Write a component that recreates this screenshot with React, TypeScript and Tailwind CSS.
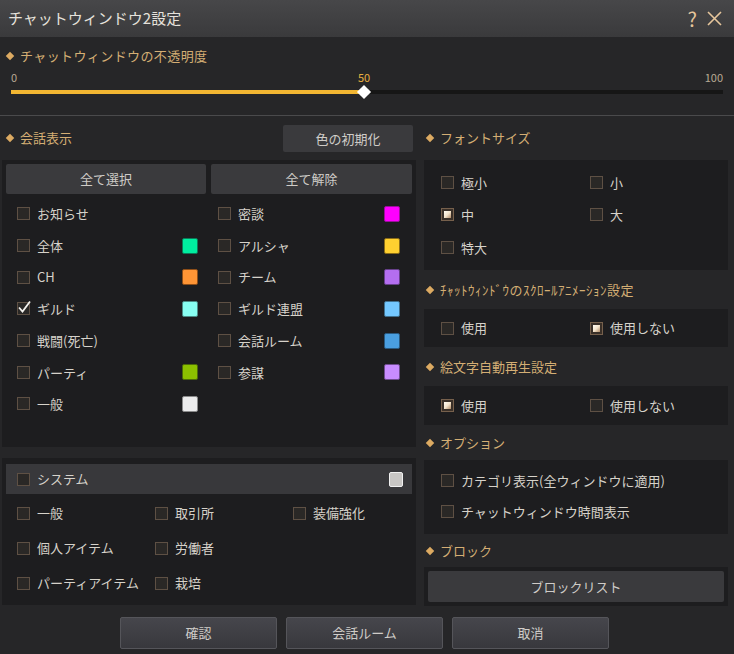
import React from "react";

type Mark = "none" | "check" | "dot";

const Box = ({ mark = "none" }: { mark?: Mark }) => {
  if (mark === "dot") {
    return (
      <span className="flex w-[13px] h-[13px] shrink-0 border border-[#76604c] bg-[#3a3028] p-[2px]">
        <span className="flex-1 bg-gradient-to-br from-[#fffcf4] via-[#f4e4cc] to-[#b08c68]" />
      </span>
    );
  }
  return (
    <span className="relative w-[13px] h-[13px] shrink-0 border border-[#5e5044] bg-[#2a2826]">
      {mark === "check" && (
        <svg className="absolute -top-[3px] -left-[1px] w-[15px] h-[14px]" viewBox="0 0 15 14">
          <path d="M2 7.5 L5.5 11.5 L13 1.5" fill="none" stroke="#f4f2ee" strokeWidth="1.8" />
        </svg>
      )}
    </span>
  );
};

const Heading = ({ text, className = "" }: { text: string; className?: string }) => (
  <div className={`flex items-center gap-[7px] text-[13px] text-[#d4ae74] ${className}`}>
    <span className="w-[6px] h-[6px] rotate-45 bg-[#dcaa62]" />
    <span>{text}</span>
  </div>
);

const Check = ({ label, mark, className = "" }: { label: string; mark?: Mark; className?: string }) => (
  <div className={`flex items-center gap-[7px] text-[13px] text-[#d6d2ca] ${className}`}>
    <Box mark={mark} />
    <span className="whitespace-nowrap">{label}</span>
  </div>
);

const Swatch = ({ color }: { color: string }) => <span className={`w-4 h-4 shrink-0 rounded-[2px] border ${color}`} />;

type Item = { label: string; mark?: Mark; color?: string } | null;

const rows: [Item, Item][] = [
  [{ label: "お知らせ" }, { label: "密談", color: "bg-[#ff00ff] border-[#9a109a]" }],
  [{ label: "全体", color: "bg-[#00eea0] border-[#0c7a58]" }, { label: "アルシャ", color: "bg-[#ffd030] border-[#8a6c18]" }],
  [{ label: "CH", color: "bg-[#ff9535] border-[#8e4e18]" }, { label: "チーム", color: "bg-[#b46ef0] border-[#66408a]" }],
  [{ label: "ギルド", mark: "check", color: "bg-[#88fff2] border-[#4c8c86]" }, { label: "ギルド連盟", color: "bg-[#74c8ff] border-[#40708e]" }],
  [{ label: "戦闘(死亡)" }, { label: "会話ルーム", color: "bg-[#4a9fe0] border-[#2a5a80]" }],
  [{ label: "パーティ", color: "bg-[#8cc000] border-[#4c6a08]" }, { label: "参謀", color: "bg-[#c88cff] border-[#6e4c8e]" }],
  [{ label: "一般", color: "bg-[#ececec] border-[#8a8a8a]" }, null],
];

const systemRows = [
  ["一般", "取引所", "装備強化"],
  ["個人アイテム", "労働者", ""],
  ["パーティアイテム", "栽培", ""],
];

const Btn = ({ label, className = "" }: { label: string; className?: string }) => (
  <button className={`flex items-center justify-center rounded-[2px] bg-[#3a3a3d] text-[13px] text-[#cfccc8] ${className}`}>
    {label}
  </button>
);

const Cell = ({ item, className }: { item: Item; className: string }) => (
  <div className={`flex items-center shrink-0 ${className}`}>
    {item && (
      <>
        <Check label={item.label} mark={item.mark} className="flex-1" />
        {item.color && <Swatch color={item.color} />}
      </>
    )}
  </div>
);

const Panel = ({ children, className = "" }: { children: React.ReactNode; className?: string }) => (
  <div className={`bg-[#1d1d1f] ${className}`}>{children}</div>
);

export default function App() {
  return (
    <div
      className="w-[734px] h-[654px] overflow-hidden bg-[#262628] flex flex-col"
      style={{ fontFamily: '"Noto Sans CJK JP", "Noto Sans", sans-serif' }}
    >
      {/* title */}
      <div className="h-[37px] flex items-center pl-[8px] pr-[12px] bg-gradient-to-b from-[#474749] to-[#3a3a3c]">
        <span className="text-[15px] text-[#e6e2dc] flex-1">チャットウィンドウ2設定</span>
        <span className="text-[20px] leading-none text-[#e6c69c] mr-[10px]">?</span>
        <svg width="15" height="15" viewBox="0 0 15 15">
          <path d="M1 1 L14 14 M14 1 L1 14" stroke="#e6c69c" strokeWidth="1.6" />
        </svg>
      </div>

      {/* opacity */}
      <div className="h-[79px] border-b border-[#4a4a4c] pt-[9px]">
        <Heading text="チャットウィンドウの不透明度" className="pl-[7px] tracking-[0.4px]" />
        <div className="relative mx-[11px] mt-[3px] flex justify-between text-[11px] text-[#b8aa94]">
          <span>0</span>
          <span className="absolute left-[347px] text-[#e8b040]">50</span>
          <span>100</span>
        </div>
        <div className="relative mx-[11px] mt-[5px] h-[4px] bg-[#161616]">
          <div className="h-full w-[353px] bg-[#f2b632]" />
          <span className="absolute left-[348px] -top-[3px] w-[10px] h-[10px] rotate-45 bg-white" />
        </div>
      </div>

      {/* middle */}
      <div className="flex h-[490px]">
        {/* left */}
        <div className="w-[418px] flex flex-col">
          <div className="h-[44px] flex items-center justify-between pr-[5px]">
            <Heading text="会話表示" className="pl-[7px]" />
            <Btn label="色の初期化" className="w-[130px] h-[27px] mt-[1px]" />
          </div>
          <Panel className="ml-[2px] w-[414px] h-[287px] pt-[4px] px-[4px]">
            <div className="flex gap-[5px]">
              <Btn label="全て選択" className="w-[200px] h-[30px]" />
              <Btn label="全て解除" className="w-[201px] h-[30px]" />
            </div>
            <div className="mt-[4px] -mx-[4px]">
              {rows.map(([a, b], i) => (
                <div key={i} className="flex h-[31.7px]">
                  <Cell item={a} className="w-[205px] pl-[15px] pr-[9px]" />
                  <Cell item={b} className="w-[209px] pl-[11px] pr-[16px]" />
                </div>
              ))}
            </div>
          </Panel>
          <Panel className="ml-[2px] w-[414px] mt-[11px] h-[147px] pt-[6px] px-[4px]">
            <div className="h-[30px] flex items-center justify-between bg-[#38383b] pl-[11px] pr-[9px]">
              <Check label="システム" />
              <span className="w-[14px] h-[15px] rounded-[2px] border border-[#f0f0f0] bg-[#c8c6c4]" />
            </div>
            <div className="mt-[1.5px] pl-[11px] grid grid-cols-[138px_138px_1fr]">
              {systemRows.flat().map((l, i) => (
                <div key={i} className="h-[35px] flex items-center">
                  {l && <Check label={l} />}
                </div>
              ))}
            </div>
          </Panel>
        </div>

        {/* right */}
        <div className="ml-[6px] w-[304px] flex flex-col">
          <div className="h-[44px] flex items-center">
            <Heading text="フォントサイズ" className="pl-[3px]" />
          </div>
          <Panel className="h-[110px] pt-[6px] pl-[17px]">
            <div className="grid grid-cols-[149px_1fr]">
              <Check label="極小" className="h-[32.5px]" />
              <Check label="小" className="h-[32.5px]" />
              <Check label="中" mark="dot" className="h-[32.5px]" />
              <Check label="大" className="h-[32.5px]" />
              <Check label="特大" className="h-[32.5px]" />
            </div>
          </Panel>
          <div className="h-[39px] flex items-center">
            <Heading text="ﾁｬｯﾄｳｨﾝﾄﾞｳのｽｸﾛｰﾙｱﾆﾒｰｼｮﾝ設定" className="pl-[3px] tracking-[0.5px]" />
          </div>
          <Panel className="h-[38px] pl-[17px] flex items-center">
            <Check label="使用" className="w-[149px]" />
            <Check label="使用しない" mark="dot" />
          </Panel>
          <div className="h-[39px] flex items-center">
            <Heading text="絵文字自動再生設定" className="pl-[3px]" />
          </div>
          <Panel className="h-[39px] pl-[17px] flex items-center">
            <Check label="使用" mark="dot" className="w-[149px]" />
            <Check label="使用しない" />
          </Panel>
          <div className="h-[35px] flex items-center">
            <Heading text="オプション" className="pl-[3px]" />
          </div>
          <Panel className="h-[74px] pl-[17px] pt-[5px]">
            <Check label="カテゴリ表示(全ウィンドウに適用)" className="h-[31px]" />
            <Check label="チャットウィンドウ時間表示" className="h-[31px]" />
          </Panel>
          <div className="h-[33px] flex items-center">
            <Heading text="ブロック" className="pl-[3px]" />
          </div>
          <Panel className="h-[39px] px-[4px] pt-[4px]">
            <Btn label="ブロックリスト" className="w-full h-[31px]" />
          </Panel>
        </div>
      </div>

      {/* bottom */}
      <div className="flex justify-center gap-[9px] pt-[11px] pr-[5px]">
        <Btn label="確認" className="w-[157px] h-[32px] border border-[#55555a] bg-gradient-to-b from-[#46464c] to-[#38383d]" />
        <Btn label="会話ルーム" className="w-[157px] h-[32px] border border-[#55555a] bg-gradient-to-b from-[#46464c] to-[#38383d]" />
        <Btn label="取消" className="w-[157px] h-[32px] border border-[#55555a] bg-gradient-to-b from-[#46464c] to-[#38383d]" />
      </div>
    </div>
  );
}
